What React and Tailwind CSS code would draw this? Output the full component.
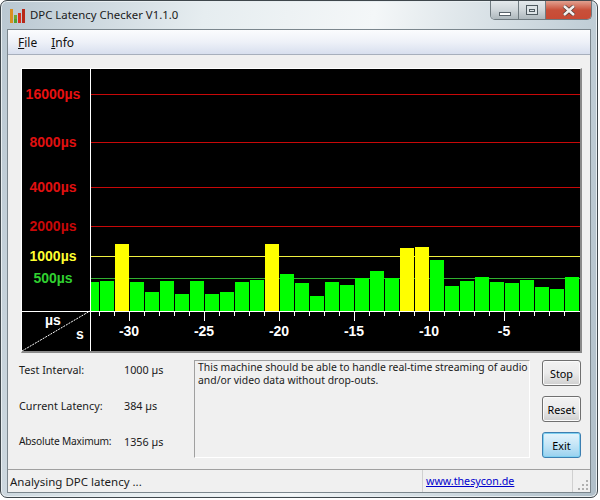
import React from 'react';

const UI_FONT = "font-['Noto_Sans','Open_Sans',sans-serif]";

// bar tops read off the graph, oldest sample first
const BAR_TOPS = [
  282, 281, 244, 282, 292, 281, 294, 281, 294, 292, 282, 280, 244, 274, 283, 296,
  282, 285, 278, 271, 278, 248, 247, 260, 286, 281, 277, 282, 283, 280, 287, 289, 277,
];

const GRID = [
  { y: 94, label: '16000µs', line: '#c80808', text: '#e81010', x: 53 },
  { y: 142, label: '8000µs', line: '#c80808', text: '#e01010', x: 53 },
  { y: 187, label: '4000µs', line: '#c80808', text: '#e01010', x: 53 },
  { y: 226, label: '2000µs', line: '#c80808', text: '#c80808', x: 53 },
  { y: 256, label: '1000µs', line: '#f0f040', text: '#ffff30', x: 53 },
  { y: 278, label: '500µs', line: '#30b030', text: '#30d030', x: 53 },
];

const AXIS = [
  { x: 129, label: '-30' },
  { x: 204, label: '-25' },
  { x: 279, label: '-20' },
  { x: 354, label: '-15' },
  { x: 429, label: '-10' },
  { x: 504, label: '-5' },
];

function AppIcon() {
  return (
    <svg width="15" height="15" viewBox="0 0 15 15" className="shrink-0">
      <rect x="0" y="1" width="3" height="14" fill="#d89020" />
      <rect x="4" y="7" width="3" height="8" fill="#70a830" />
      <rect x="4" y="11" width="3" height="4" fill="#50a030" />
      <rect x="8" y="5" width="3" height="10" fill="#d83020" />
      <rect x="12" y="1" width="3" height="14" fill="#b82818" />
    </svg>
  );
}

function WindowButtons() {
  return (
    <div className="flex h-[19px] w-[102px] rounded-b-[5px] border border-t-0 border-[#6f7a80] overflow-hidden shrink-0">
      <div className="w-[28px] flex items-end justify-center pb-[3px] border-r border-[#6f7a80] bg-gradient-to-b from-[#e4e9ec] via-[#cfd6da] to-[#aeb8bd]">
        <div className="w-[12px] h-[4px] bg-white border border-[#59636a]" />
      </div>
      <div className="w-[27px] flex items-center justify-center border-r border-[#6f7a80] bg-gradient-to-b from-[#e4e9ec] via-[#cfd6da] to-[#aeb8bd]">
        <div className="w-[12px] h-[10px] border border-[#4f5a60] flex items-center justify-center bg-[#dde3e6]">
          <div className="w-[6px] h-[3px] border border-[#4f5a60]" />
        </div>
      </div>
      <div className="flex-1 flex items-center justify-center bg-gradient-to-b from-[#e0a090] via-[#c8503a] to-[#c84a34]">
        <svg width="14" height="11" viewBox="0 0 14 11">
          <path d="M2 1 L12 10 M12 1 L2 10" stroke="#4a3a36" strokeWidth="4" />
          <path d="M2 1 L12 10 M12 1 L2 10" stroke="#f4f0ee" strokeWidth="2.6" />
        </svg>
      </div>
    </div>
  );
}

function LatencyGraph() {
  return (
    <svg width="558" height="282" viewBox="22 69 558 282" className="block">
      <rect x="22" y="69" width="558" height="282" fill="#000" />
      {GRID.map((g) => (
        <g key={g.label}>
          <rect x="90" y={g.y} width="490" height="1" fill={g.line} />
          <text
            x={g.x}
            y={g.y + 5}
            textAnchor="middle"
            fill={g.text}
            fontSize="14"
            fontWeight="700"
            fontFamily="'Liberation Sans', sans-serif"
          >
            {g.label}
          </text>
        </g>
      ))}
      {BAR_TOPS.map((top, i) => (
        <rect
          key={i}
          x={i === 0 ? 91 : 85 + i * 15}
          y={top}
          width={i === 0 ? 8 : 14}
          height={311 - top}
          fill={top < 256 ? '#ffff00' : '#00ff00'}
        />
      ))}
      <rect x="22" y="311" width="558" height="1" fill="#fff" />
      <rect x="90" y="69" width="1" height="282" fill="#fff" />
      {Array.from({ length: 32 }, (_, i) => (
        <rect key={i} x={99 + i * 15} y="312" width="1" height={(i + 3) % 5 === 0 ? 9 : 4} fill="#fff" />
      ))}
      {AXIS.map((a) => (
        <text
          key={a.label}
          x={a.x}
          y="336"
          textAnchor="middle"
          fill="#fff"
          fontSize="14"
          fontWeight="700"
          fontFamily="'Liberation Sans', sans-serif"
        >
          {a.label}
        </text>
      ))}
      <path d="M22 351 L90 311" stroke="#fff" strokeWidth="1" strokeDasharray="2 1" />
      <text x="45" y="325" fill="#fff" fontSize="14" fontWeight="700" fontFamily="'Liberation Sans', sans-serif">µs</text>
      <text x="76" y="339" fill="#fff" fontSize="14" fontWeight="700" fontFamily="'Liberation Sans', sans-serif">s</text>
    </svg>
  );
}

function Stat({ label, value, labelClass }) {
  return (
    <div className="flex items-center h-[16px] whitespace-nowrap">
      <span className={`w-[105px] ${labelClass || ''}`}>{label}</span>
      <span>{value}</span>
    </div>
  );
}

function ActionButton({ children, focused }) {
  return (
    <button
      className={
        focused
          ? 'w-[39px] h-[26px] rounded-[3px] border border-[#3c7fb1] bg-gradient-to-b from-[#e5f4fc] via-[#c4e5f6] to-[#98d1ef] shadow-[inset_0_0_0_1px_#7fd0f0] text-[10.8px] text-black'
          : 'w-[39px] h-[26px] rounded-[3px] border border-[#707070] bg-gradient-to-b from-[#f2f2f2] via-[#ebebeb] to-[#cfcfcf] shadow-[inset_0_0_0_1px_#fbfbfb] text-[10.8px] text-black'
      }
    >
      {children}
    </button>
  );
}

export default function App() {
  return (
    <div className={`w-[600px] h-[500px] bg-white ${UI_FONT}`}>
      <div className="w-[598px] h-[498px] flex flex-col rounded-[7px] border border-[#3f474c] bg-[linear-gradient(100deg,#b9c7d1_0%,#e6edf0_30%,#f4f7f8_55%,#c3d0d8_85%,#b0bfc9_100%)] px-[6px] pb-[4px] shadow-[inset_0_0_0_1px_#e8eef1]">
        {/* Title bar */}
        <div className="h-[28px] flex items-start shrink-0">
          <div className="flex items-center gap-[5px] pl-[3px] pt-[6px] text-[11.4px] leading-[16px] text-[#1a1a1a]">
            <AppIcon />
            <span>DPC Latency Checker V1.1.0</span>
          </div>
          <div className="ml-auto translate-x-[1px]">
            <WindowButtons />
          </div>
        </div>

        {/* Client area */}
        <div className="flex-1 flex flex-col min-h-0 border border-[#7b868d] bg-[#f0f0f0]">
          <div className="h-[25px] shrink-0 flex items-center gap-[14px] pl-[10px] pt-[2px] border-b border-[#a7afbc] bg-gradient-to-b from-[#fbfcfe] via-[#eef1f8] to-[#d8dfee] text-[12px] text-[#111]">
            <span><span className="underline">F</span>ile</span>
            <span><span className="underline">I</span>nfo</span>
          </div>

          <div className="flex-1 flex flex-col pt-[13px] pl-[13px]">
            <div className="self-start border-l border-t border-white border-r-[2px] border-b-[2px] border-r-[#8a8a8a] border-b-[#8a8a8a]">
              <LatencyGraph />
            </div>

            <div className="flex mt-[7px] text-[10.8px] leading-[13px] text-[#1a1a1a]">
              <div className="w-[175px] flex flex-col gap-[20px] -ml-[2px] mt-[1px]">
                <Stat label="Test Interval:" value="1000 µs" />
                <Stat label="Current Latency:" value="384 µs" />
                <Stat label="Absolute Maximum:" value="1356 µs" labelClass="text-[10.2px] tracking-[-0.02em]" />
              </div>
              <div className="w-[336px] h-[98px] border border-[#a0a0a0] border-r-white border-b-white px-[3px] text-[10.4px] whitespace-nowrap">
                <p>This machine should be able to handle real-time streaming of audio</p>
                <p>and/or video data without drop-outs.</p>
              </div>
              <div className="flex flex-col ml-[12px] gap-[10px]">
                <ActionButton>Stop</ActionButton>
                <ActionButton>Reset</ActionButton>
                <ActionButton focused>Exit</ActionButton>
              </div>
            </div>
          </div>

          {/* Status bar */}
          <div className="h-[23px] shrink-0 flex items-center border-t border-[#a0a0a0] text-[11.5px] text-[#1a1a1a]">
            <div className="w-[414px] pl-[2px] pt-[1px]">Analysing DPC latency ...</div>
            <div className="w-[150px] h-full flex items-center pl-[3px] pt-[1px] border-l border-[#d0d0d0]">
              <span className="underline text-[#0000cc] text-[10.7px]">www.thesycon.de</span>
            </div>
            <div className="flex-1 h-full border-l border-[#d0d0d0] flex items-end justify-end pb-[1px] pr-[1px]">
              <svg width="12" height="12" viewBox="0 0 12 12">
                <g fill="#b0b0b0">
                  <rect x="9" y="1" width="2" height="2" />
                  <rect x="5" y="5" width="2" height="2" />
                  <rect x="9" y="5" width="2" height="2" />
                  <rect x="1" y="9" width="2" height="2" />
                  <rect x="5" y="9" width="2" height="2" />
                  <rect x="9" y="9" width="2" height="2" />
                </g>
              </svg>
            </div>
          </div>
        </div>
      </div>
    </div>
  );
}
